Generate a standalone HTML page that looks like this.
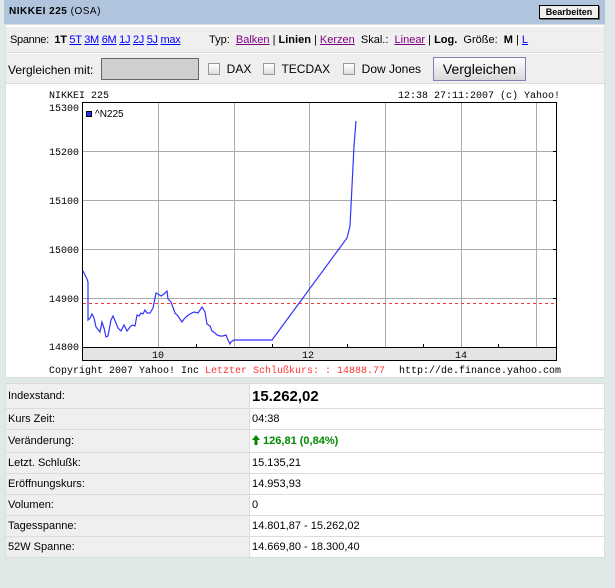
<!DOCTYPE html>
<html><head><meta charset="utf-8">
<style>
*{margin:0;padding:0;box-sizing:border-box}
body{width:615px;height:588px;background:#dfe9e8;position:relative;overflow:hidden;font-family:"Liberation Sans",Arial,sans-serif;font-size:11px;color:#000}
.a{position:absolute}
a{color:#00f;text-decoration:underline}
a.v{color:#800080}
.cb{display:inline-block;width:12px;height:12px;border:1px solid #999;background:linear-gradient(#fff,#ddd);vertical-align:-2px}
table{border-collapse:collapse}
td{border:1px solid #dcdcdc;height:21px;padding:0 2px;font-size:11px}
td.l{background:#efefef;width:244px}
td.r{background:#fff}
</style></head><body>
<div class="a" style="left:4px;top:0;width:601px;height:24px;background:#b0c4de"></div>
<div class="a" style="left:9px;top:6px;font-size:10px;font-weight:bold;letter-spacing:0.5px">NIKKEI 225 <span style="font-weight:normal">(OSA)</span></div>
<div class="a" style="left:539px;top:5px;width:60px;height:14px;border:1px solid #000;background:#f0f0f0;font-size:9px;font-weight:bold;text-align:center;line-height:12px;box-shadow:1px 1px 0 #666">Bearbeiten</div>

<div class="a" style="left:5px;top:24px;width:600px;height:354px;background:#fff;border:1px solid #ddd"></div>
<div class="a" style="left:6px;top:27px;width:598px;height:26px;background:#efefef;border-bottom:1px solid #ddd"></div>
<div class="a" style="left:10px;top:34px;white-space:nowrap;letter-spacing:-0.3px">Spanne: &nbsp;<b>1T</b> <a href="#">5T</a> <a href="#">3M</a> <a href="#">6M</a> <a href="#">1J</a> <a href="#">2J</a> <a href="#">5J</a> <a href="#">max</a></div>
<div class="a" style="left:209px;top:34px;white-space:nowrap">Typ: &nbsp;<a class="v" href="#">Balken</a> | <b>Linien</b> | <a class="v" href="#">Kerzen</a> &nbsp;Skal.: &nbsp;<a class="v" href="#">Linear</a> | <b>Log.</b> &nbsp;Größe: &nbsp;<b>M</b> | <a href="#">L</a></div>
<div class="a" style="left:6px;top:54px;width:598px;height:30px;background:#efefef;border-bottom:1px solid #ddd"></div>
<div class="a" style="left:8px;top:63px;font-size:12px">Vergleichen mit:</div>
<div class="a" style="left:101px;top:58px;width:98px;height:22px;background:#d0d0d0;border:1px solid #666"></div>
<div class="a" style="left:208px;top:62px;font-size:12px"><span class="cb"></span>&nbsp; DAX</div>
<div class="a" style="left:263px;top:62px;font-size:12px"><span class="cb"></span>&nbsp; TECDAX</div>
<div class="a" style="left:343px;top:62px;font-size:12px"><span class="cb"></span>&nbsp; Dow Jones</div>
<div class="a" style="left:433px;top:57px;width:93px;height:24px;border:1px solid #8080b0;background:linear-gradient(#fff,#d8d8d8);font-size:14px;text-align:center;line-height:22px">Vergleichen</div>

<svg class="a" style="left:0;top:0" width="615" height="380">
<rect x="82.5" y="347.5" width="474" height="13" fill="#e4e4e4" stroke="#000"/>
<g font-family="Liberation Mono,DejaVu Sans Mono,monospace" font-size="10">
<text x="49" y="98">NIKKEI 225</text>
<text x="398" y="98">12:38 27:11:2007 (c) Yahoo!</text>
<text x="49" y="111">15300</text><text x="49" y="155">15200</text><text x="49" y="204">15100</text><text x="49" y="253">15000</text><text x="49" y="302">14900</text><text x="49" y="350">14800</text>
<text x="152" y="358">10</text><text x="302" y="358">12</text><text x="455" y="358">14</text>
<text x="49" y="373">Copyright 2007 Yahoo! Inc <tspan fill="#f33">Letzter Schlußkurs: : 14888.77</tspan></text>
<text x="399" y="373">http://de.finance.yahoo.com</text>
</g>
<text x="95" y="117" font-family="Liberation Sans,sans-serif" font-size="10">^N225</text>
<g stroke="#aaa" stroke-width="1">
<line x1="158.5" y1="102" x2="158.5" y2="347"/><line x1="234.5" y1="102" x2="234.5" y2="347"/><line x1="309.5" y1="102" x2="309.5" y2="347"/><line x1="385.5" y1="102" x2="385.5" y2="347"/><line x1="461.5" y1="102" x2="461.5" y2="347"/><line x1="536.5" y1="102" x2="536.5" y2="347"/>
<line x1="82" y1="151.5" x2="556" y2="151.5"/><line x1="82" y1="200.5" x2="556" y2="200.5"/><line x1="82" y1="249.5" x2="556" y2="249.5"/><line x1="82" y1="298.5" x2="556" y2="298.5"/>
</g>
<g stroke="#000"><line x1="196.5" y1="344" x2="196.5" y2="347"/><line x1="272.5" y1="344" x2="272.5" y2="347"/><line x1="347.5" y1="344" x2="347.5" y2="347"/><line x1="423.5" y1="344" x2="423.5" y2="347"/><line x1="498.5" y1="344" x2="498.5" y2="347"/>
<line x1="553" y1="151.5" x2="556" y2="151.5"/><line x1="553" y1="200.5" x2="556" y2="200.5"/><line x1="553" y1="249.5" x2="556" y2="249.5"/><line x1="553" y1="298.5" x2="556" y2="298.5"/></g>
<line x1="83" y1="303.5" x2="556" y2="303.5" stroke="#f33" stroke-dasharray="3,3"/>
<rect x="82.5" y="102.5" width="474" height="245" fill="none" stroke="#000"/>
<rect x="86.5" y="111.5" width="5" height="5" fill="#23f" stroke="#000"/>
<polyline fill="none" stroke="#33f" stroke-width="1.2" points="83,271 87,279 88,282 88,320 90,318 92,314 94,318 96,327 100,332 102,322 104,328 106,337 108,336 111,320 113,316 116,323 118,328 121,331 124,325 127,331 130,327 132,325 135,326 137,315 139,316 141,313 143,314 145,310 147,313 150,313 153,308 156,293 158,294 161,296 164,294 167,291 168,299 171,302 175,313 178,316 182,322 184,319 186,317 190,314 194,312 198,313 202,307 205,312 207,324 210,326 212,331 215,333 217,335 220,336 223,336 226,335 228,340 230,344 231,342 234,340 272,340 347,238 350,226 354,146 356,121"/>
</svg>

<table class="a" style="left:5px;top:383px;width:600px">
<tr><td class="l" style="height:25px">Indexstand:</td><td class="r" style="font-size:15px;font-weight:bold">15.262,02</td></tr>
<tr><td class="l">Kurs Zeit:</td><td class="r">04:38</td></tr>
<tr><td class="l" style="height:23px">Veränderung:</td><td class="r" style="color:#080;font-weight:bold"><svg width="8" height="10" style="vertical-align:-1px"><path d="M4 0 L8 5 L5.5 5 L5.5 10 L2.5 10 L2.5 5 L0 5 Z" fill="#080"/></svg> 126,81 (0,84%)</td></tr>
<tr><td class="l">Letzt. Schlußk:</td><td class="r">15.135,21</td></tr>
<tr><td class="l">Eröffnungskurs:</td><td class="r">14.953,93</td></tr>
<tr><td class="l">Volumen:</td><td class="r">0</td></tr>
<tr><td class="l">Tagesspanne:</td><td class="r">14.801,87 - 15.262,02</td></tr>
<tr><td class="l">52W Spanne:</td><td class="r">14.669,80 - 18.300,40</td></tr>
</table>
</body></html>
